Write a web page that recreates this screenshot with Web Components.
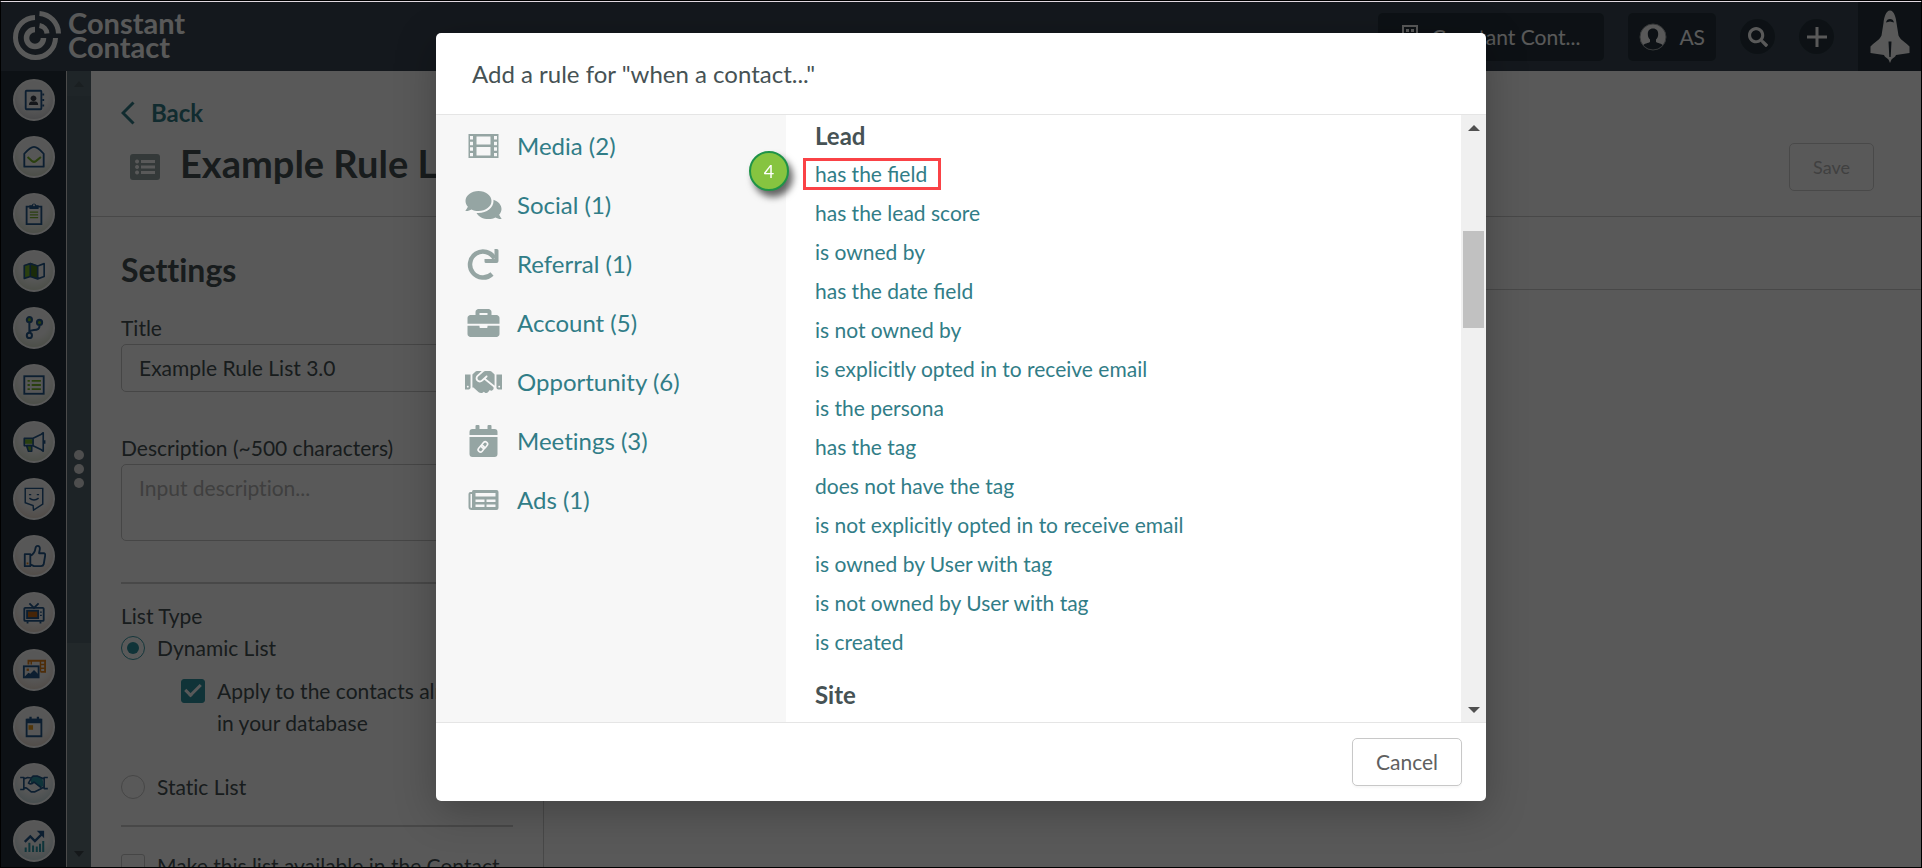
<!DOCTYPE html>
<html lang="en">
<head>
<meta charset="utf-8">
<title>Example Rule List 3.0</title>
<style>
    html, body {
        margin: 0;
        height: 100%;
    }

    body {
        font-family: Lato, "Liberation Sans", sans-serif;
        font-size: 21px;
        font-variant-ligatures: none;
        line-height: 32px;
        color: #465254;
        --link: #317d87;
        --rule: #cfcfcf;
    }
</style>
</head>
<body>
    <app-shell>
        <app-bar slot="bar" account="Constant Cont..." user="AS"></app-bar>
        <nav-rail slot="rail"></nav-rail>
        <list-page heading="Example Rule List 3.0">
            <list-settings></list-settings>
        </list-page>
        <rule-dialog slot="dialog">
            <span slot="title">Add a rule for "when a contact..."</span>

            <rule-category slot="category" icon="film">Media (2)</rule-category>
            <rule-category slot="category" icon="comments">Social (1)</rule-category>
            <rule-category slot="category" icon="redo">Referral (1)</rule-category>
            <rule-category slot="category" icon="briefcase">Account (5)</rule-category>
            <rule-category slot="category" icon="handshake">Opportunity (6)</rule-category>
            <rule-category slot="category" icon="meeting">Meetings (3)</rule-category>
            <rule-category slot="category" icon="news">Ads (1)</rule-category>

            <rule-group heading="Lead">
                <rule-option step="4">has the field</rule-option>
                <rule-option>has the lead score</rule-option>
                <rule-option>is owned by</rule-option>
                <rule-option>has the date field</rule-option>
                <rule-option>is not owned by</rule-option>
                <rule-option>is explicitly opted in to receive email</rule-option>
                <rule-option>is the persona</rule-option>
                <rule-option>has the tag</rule-option>
                <rule-option>does not have the tag</rule-option>
                <rule-option>is not explicitly opted in to receive email</rule-option>
                <rule-option>is owned by User with tag</rule-option>
                <rule-option>is not owned by User with tag</rule-option>
                <rule-option>is created</rule-option>
            </rule-group>
            <rule-group heading="Site"></rule-group>
        </rule-dialog>
    </app-shell>

<script>
const BLUE = '#24588a';
const GREEN = '#78b52c';
const ORANGE = '#e0801c';
const TEAL = '#2b96a5';

// name: [viewBox, markup]
const ICONS = {
    // header
    logo: ['0 0 50 50', `<g fill="none" stroke="currentColor">
        <path stroke-width="5" d="M23 6.500A20 20 0 1 0 43.500 27"/>
        <path stroke-width="5" d="M27.500 2.500A20.500 20.500 0 0 1 46.500 22.500"/>
        <path stroke-width="5.500" d="M23 18.500A8.500 8.500 0 1 0 31.500 27"/>
        <path stroke-width="5" d="M27.500 14.500A9 9 0 0 1 35 22.500"/></g>`],
    building: ['0 0 16 24', `<path fill="none" stroke="currentColor" stroke-width="2" d="M1 1h14v22H1z"/>
        <path fill="currentColor" d="M4 4h3v3H4zM9 4h3v3H9zM4 10h3v3H4zM9 10h3v3H9zM6 17h4v6H6z"/>`],
    avatar: ['0 0 28 28', `<circle cx="14" cy="14" r="13" fill="#fff"/>
        <path fill="#25333c" d="M14 5.500c3.500 0 5.200 2.300 5.200 5.400 0 2.400-.8 4.400-2.200 5.700v2.200c0 1 4.600 1.300 7 3.400A13 13 0 0 1 4 22.200c2.400-2.100 7-2.400 7-3.400v-2.200c-1.400-1.300-2.200-3.300-2.200-5.700 0-3.100 1.700-5.400 5.200-5.400z"/>
        <circle cx="14" cy="14" r="13" fill="none" stroke="#9a9fa3" stroke-width="1"/>`],
    search: ['0 0 512 512', `<path fill="currentColor" d="M505 442.700L405.300 343c-4.500-4.500-10.600-7-17-7H372c27.600-35.300 44-79.700 44-128C416 93.100 322.900 0 208 0S0 93.100 0 208s93.100 208 208 208c48.300 0 92.700-16.400 128-44v16.300c0 6.400 2.500 12.500 7 17l99.700 99.700c9.400 9.400 24.600 9.400 33.900 0l28.300-28.300c9.400-9.400 9.400-24.600.1-34zM208 336c-70.700 0-128-57.200-128-128 0-70.700 57.200-128 128-128 70.700 0 128 57.200 128 128 0 70.700-57.200 128-128 128z"/>`],
    plus: ['0 0 20 20', `<path stroke="currentColor" stroke-width="3" d="M10 0v20M0 10h20"/>`],
    shuttle: ['0 0 40 52', `<path fill="currentColor" fill-rule="evenodd" d="M20 0c4 0 6 7 6.500 12.500L28.500 25c2 4.500 6 6 11 11v6.500L26 44.500c-.5 2-2.500 2.500-4.500 4.500L20 52.500 18.500 49c-2-2-4-2.500-4.500-4.500L.5 42.500V36c5-5 9-6.500 11-11l2-12.500C14 7 16 0 20 0zm0 8.500c-2 0-3.500 1-4 3.500l4-1 4 1c-.5-2.500-2-3.500-4-3.500zM18.500 31l.8 15.500h1.400L21.500 31z"/>`],

    // page
    back: ['0 0 14 24', `<path fill="none" stroke="currentColor" stroke-width="3" d="M12.500 1.500L2 12l10.500 10.500"/>`],
    list: ['0 0 30 26', `<path fill="currentColor" fill-rule="evenodd" d="M3 0h24a3 3 0 0 1 3 3v20a3 3 0 0 1-3 3H3a3 3 0 0 1-3-3V3a3 3 0 0 1 3-3zm4 5.500a2 2 0 1 0 .1 0zM11 6v3h14V6zm-4 5a2 2 0 1 0 .1 0zM11 11.500v3h14v-3zM7 16.500a2 2 0 1 0 .1 0zM11 17v3h14v-3z"/>`],

    // dialog
    film: ['-2 -3 36 32', `<path fill="currentColor" fill-rule="evenodd" d="M1 1h30v24H1zM2.500 3v3.500h3V3zm0 5.700v3.500h3V8.700zm0 5.600v3.500h3v-3.500zm0 5.600v3.300h3v-3.300zM26.500 3v3.500h3V3zm0 5.700v3.500h3V8.700zm0 5.600v3.500h3v-3.500zm0 5.600v3.300h3v-3.300zM9 3.500v8h14v-8zM9 14v8.500h14V14z"/>`],
    comments: ['0 0 576 512', `<path fill="currentColor" d="M416 192c0-88.400-93.100-160-208-160S0 103.600 0 192c0 34.300 14.100 65.900 38 92-13.400 30.200-35.500 54.200-35.800 54.500-2.200 2.300-2.800 5.700-1.500 8.700S4.800 352 8 352c36.600 0 66.900-12.300 88.700-25 32.200 15.700 70.300 25 111.300 25 114.900 0 208-71.600 208-160zm122 220c23.900-26 38-57.700 38-92 0-66.900-53.500-124.200-129.300-148.100.9 6.600 1.300 13.300 1.300 20.100 0 105.900-107.700 192-240 192-10.800 0-21.300-.8-31.700-1.900C207.800 439.600 281.800 480 368 480c41 0 79.100-9.200 111.300-25 21.800 12.700 52.100 25 88.700 25 3.200 0 6.100-1.900 7.300-4.800 1.300-2.900.7-6.300-1.500-8.700-.3-.3-22.400-24.200-35.800-54.500z"/>`],
    redo: ['-2 0 36 32', `<path fill="none" stroke="currentColor" stroke-width="4.500" d="M24.500 26A13 13 0 1 1 27 10.500"/>
        <path fill="currentColor" d="M27 1h2.500q1.500 0 1.500 1.500V13q0 2-2 2H18.500Q17 15 17 13.500V11h10z"/>`],
    briefcase: ['0 0 512 512', `<path fill="currentColor" d="M320 320c0 8.840-7.160 16-16 16h-96c-8.840 0-16-7.160-16-16v-22H0v134c0 25.600 22.400 48 48 48h416c25.600 0 48-22.400 48-48V298H320v22zm144-192h-80V80c0-25.600-22.400-48-48-48H176c-25.600 0-48 22.400-48 48v48H48c-25.600 0-48 22.400-48 48v90h512v-90c0-25.600-22.400-48-48-48zm-144 0H192V96h128v32z"/>`],
    handshake: ['0 0 640 512', `<path fill="currentColor" d="M434.700 64h-85.900c-8 0-15.700 3-21.600 8.400l-98.300 90c-.1.1-.2.3-.3.4-16.600 15.600-16.300 40.500-2.100 56 12.700 13.900 39.400 17.600 56.100 2.700.1-.1.3-.1.4-.2l79.900-73.200c6.500-5.900 16.700-5.500 22.600 1 6 6.500 5.500 16.600-1 22.600l-26.100 23.900L504 313.800c2.900 2.400 5.500 5 7.900 7.700V128l-54.600-54.600c-5.900-6-14.100-9.400-22.600-9.400zM544 128.200v223.900c0 17.700 14.300 32 32 32h64V128.200h-96zm48 223.900c-8.800 0-16-7.200-16-16s7.200-16 16-16 16 7.200 16 16-7.200 16-16 16zM0 384h64c17.700 0 32-14.300 32-32V128.200H0V384zm48-63.900c8.800 0 16 7.200 16 16s-7.200 16-16 16-16-7.200-16-16c0-8.900 7.200-16 16-16zm435.900 18.600L334.600 217.500l-30 27.500c-29.700 27.100-75.200 24.500-101.700-4.400-26.900-29.400-24.800-74.900 4.400-101.700L289.100 64h-83.800c-8.500 0-16.600 3.400-22.600 9.400L128 128v223.900h18.300l90.500 81.900c27.400 22.300 67.700 18.100 90-9.300l.2-.2 17.900 15.500c15.900 13 39.400 10.500 52.300-5.400l31.400-38.600 5.400 4.400c13.700 11.100 33.900 9.100 45-4.700l9.500-11.700c11.200-13.800 9.100-33.900-4.600-45.100z"/>`],
    meeting: ['-2 0 36 32', `<path fill="currentColor" d="M5 4h3V1q0-1 1-1h2q1 0 1 1v3h8V1q0-1 1-1h2q1 0 1 1v3h3q3 0 3 3v3H2V7q0-3 3-3zM2 12h28v17q0 3-3 3H5q-3 0-3-3z"/>
        <g fill="none" stroke="#f7f7f7" stroke-width="1.600"><rect x="-2.300" y="-3.500" width="4.600" height="7" rx="2.300" transform="translate(13.700 23.800) rotate(40)"/>
        <rect x="-2.300" y="-3.500" width="4.600" height="7" rx="2.300" transform="translate(17 20) rotate(40)"/></g>`],
    news: ['-2 -5 36 32', `<path fill="currentColor" fill-rule="evenodd" d="M6 1h23q2 0 2 2v16q0 2-2 2H4q-3 0-3-3V5q0-2 2-2h1.500Q4.500 1 6 1zM3 5v13q0 1 .7 1T4.500 18V5zM8 4v3.500h20V4zm0 6.500V13h9v-2.500zm11 0V13h9v-2.500zM8 15.500V18h9v-2.500zm11 0V18h9v-2.500z"/>`],

    // rail
    contacts: ['0 0 26 26', `<g fill="none" stroke="${BLUE}" stroke-width="2"><rect x="4" y="3" width="17" height="20" rx="1"/><path d="M22 7h2M22 13h2M22 19h2"/></g>
        <path fill="#39404a" d="M12.500 8a3.200 3.200 0 1 1-.1 0zM7.500 18.500q0-4 3-4h4q3 0 3 4z"/>`],
    mail: ['0 0 26 26', `<path fill="none" stroke="${BLUE}" stroke-width="2" stroke-linejoin="round" d="M2.500 23.500V9.500Q9 2 13 2t10.500 7.500v14z"/>
        <path fill="none" stroke="${GREEN}" stroke-width="2.200" d="M6 13l5 4.500q2 1.500 4 0L20.500 13"/>`],
    clipboard: ['0 0 26 26', `<path fill="none" stroke="${BLUE}" stroke-width="2" d="M5 5h16v19H5z"/><path fill="${BLUE}" d="M8 3.500h2.500a2.600 2.600 0 0 1 5 0H18v4H8z"/><circle cx="13" cy="3.500" r="1" fill="#f3f3f3"/>
        <path stroke="${GREEN}" stroke-width="1.400" d="M8.500 11h9M8.500 14h9M8.500 17h9"/>`],
    map: ['0 0 26 26', `<path fill="${GREEN}" d="M2 7l7-3v15l-7 2z"/><path fill="#4c7c1a" d="M9 4l8 3v15l-8-3z"/>
        <path fill="none" stroke="${BLUE}" stroke-width="1.800" stroke-linejoin="round" d="M2.500 7L9 5l8 2.500L24 5v14l-7 2.500L9 19l-6.500 2zM9 5v14M17 7.500v14"/>`],
    branch: ['0 0 26 26', `<path fill="none" stroke="${BLUE}" stroke-width="2.200" d="M8 7v12M8 17q1-1.500 5-1.800 6-.2 6-4.700"/>
        <g stroke="${BLUE}" stroke-width="2.200"><circle cx="8" cy="4" r="2.800" fill="${GREEN}"/><circle cx="19" cy="7" r="2.800" fill="${GREEN}"/><circle cx="8" cy="21" r="2.800" fill="#f3f3f3"/></g>`],
    lists: ['0 0 26 26', `<rect x="2.500" y="3.500" width="21" height="19" fill="none" stroke="${BLUE}" stroke-width="2"/>
        <path stroke="${GREEN}" stroke-width="2" d="M6 8.500h2.500M10.500 8.500h10M6 13h2.500M10.500 13h10M6 17.500h2.500M10.500 17.500h10"/>`],
    megaphone: ['0 0 26 26', `<path fill="${GREEN}" d="M2 10h10v5H2z"/><g fill="none" stroke="${BLUE}" stroke-width="1.800" stroke-linejoin="round"><path d="M2.500 9h9.500v8H2.500zM12 9l9-4.500 2-1.500v20l-2-1.500-9-4.500M24.500 11v4"/><path fill="${GREEN}" d="M5 17h5.500v6H7z"/></g>`],
    smile: ['0 0 26 26', `<g fill="none" stroke="${BLUE}" stroke-width="1.600"><path d="M3.500 1.500h19v17l-10 6.500-.5-5-8.500-3z"/><path d="M8 12q5 4 10 0"/></g><path fill="${BLUE}" d="M7.500 7.500h2.500v1.500H7.500zM16 7.500h2.500v1.500H16z"/>`],
    thumb: ['0 0 26 26', `<path fill="none" stroke="${BLUE}" stroke-width="2" stroke-linejoin="round" d="M3 11h6v13H3zM9 13q5-3 5.500-8 .3-3 2.500-3 2.500 0 2.300 3.500L18.500 10h5q2 0 1.500 3l-1.500 9q-.5 2-3 2H13l-4-2"/><path fill="${ORANGE}" d="M5 20h2v2H5z"/>`],
    tv: ['0 0 26 26', `<g fill="none" stroke="${BLUE}" stroke-width="2"><rect x="2.500" y="7.500" width="21" height="14" rx="1"/><path d="M8 2.500l5 5 5-5M6 22v2.500M20 22v2.500"/><rect x="5.500" y="10.500" width="12" height="8" fill="#c96a14"/><path stroke-width="1.400" d="M19.500 12h2M19.500 15.500h2"/></g>`],
    media: ['0 0 26 26', `<path fill="none" stroke="${ORANGE}" stroke-width="2" d="M7 7V3h18v12h-5"/><path stroke="${ORANGE}" stroke-width="1.600" d="M10 3v4M20 3v12M20 7h5M20 11h5"/>
        <rect x="2" y="9" width="16" height="12" fill="#f3f3f3" stroke="${BLUE}" stroke-width="2"/><path fill="${BLUE}" d="M3 20l4-4 2 1 4-4 5 5v3H3z"/><path fill="${ORANGE}" d="M5 11.500h2.500V14H5z"/>`],
    calendar: ['0 0 26 26', `<path fill="none" stroke="${BLUE}" stroke-width="2" d="M5 5h16v18H5z"/><path fill="${BLUE}" d="M5 4h16v5H5zM8 2h2.500v3H8zM16 2h2.500v3H16z"/><path fill="#e69a1e" d="M7 11h5v5H7z"/>`],
    deal: ['0 0 32 26', `<path fill="${TEAL}" d="M13 6l6-2 6 2 1.500 9-4 2-6-6-4 2z"/><g fill="none" stroke="${BLUE}" stroke-width="1.800" stroke-linejoin="round"><path d="M1 6h4v13H1M31 6h-4v12h4M5 7.500l4-1.500 4 .5 2-2h5l7 3M5 17l3 .5 5 4h4l6-3 4-2.500"/><path d="M13 7l-3 5q3 2 6-1l8 6"/></g>`],
    chart: ['0 0 26 26', `<path fill="none" stroke="${BLUE}" stroke-width="2.600" d="M3 14l6-6 5 5 8-8"/><path fill="${BLUE}" d="M16 2h8v8z"/>
        <path stroke="${TEAL}" stroke-width="2.200" d="M4 20v5M8 15v10M12 18v7M16 19v6M19.500 16v9M23 13v12"/>`]
};

class AppIcon extends HTMLElement {
    constructor() {
        super();
        this.attachShadow({ mode: 'open' });
    }

    connectedCallback() {
        const [viewBox, markup] = ICONS[this.getAttribute('name')];
        this.shadowRoot.innerHTML = `
        <style>
        :host {
            display: block;
            flex: none;
        }

        svg {
            display: block;
            width: 100%;
            height: 100%;
        }
        </style>
        <svg viewBox="${viewBox}" aria-hidden="true">${markup}</svg>
        `;
    }
}

class AppShell extends HTMLElement {
    constructor() {
        super();
        this.attachShadow({ mode: 'open' });

        this.shadowRoot.innerHTML = `
        <style>
        :host {
            position: relative;
            display: flex;
            flex-direction: column;
            box-sizing: border-box;
            height: 100vh;
            border: 1px solid #000;
            border-top-width: 2px;
            border-top-color: #e0d8e0;
            overflow: hidden;
            background: #fff;
        }

        .columns {
            display: flex;
            flex: 1;
            min-height: 0;
        }

        .overlay {
            position: absolute;
            inset: 0;
            display: flex;
            justify-content: center;
            align-items: flex-start;
            padding-top: 31px;
            background: rgba(0, 0, 0, 0.65);
        }

        /* dark hairline above the light one */
        .edge {
            position: fixed;
            inset: 0 0 auto;
            height: 1px;
            background: #000;
        }
        </style>
        <slot name="bar"></slot>
        <div class="columns">
            <slot name="rail"></slot>
            <slot></slot>
        </div>
        <div class="overlay"><slot name="dialog"></slot></div>
        <div class="edge"></div>
        `;
    }
}

class AppBar extends HTMLElement {
    constructor() {
        super();
        this.attachShadow({ mode: 'open' });
    }

    connectedCallback() {
        this.shadowRoot.innerHTML = `
        <style>
        :host {
            display: flex;
            align-items: stretch;
            height: 69px;
            background: #394753;
            color: #fff;
        }

        .brand {
            display: flex;
            align-items: flex-start;
            gap: 6px;
            flex: 1;
            padding: 9px 0 0 11px;
            color: #fff;
            text-decoration: none;
            font-size: 29px;
            font-weight: 700;
            line-height: 24px;
        }

        .brand app-icon {
            width: 50px;
            height: 50px;
        }

        .tools {
            display: flex;
            align-items: center;
            gap: 24px;
            padding-right: 24px;
        }

        button {
            display: flex;
            align-items: center;
            height: 48px;
            border: 0;
            border-radius: 5px;
            background: #25333c;
            color: #fff;
            font: inherit;
        }

        .account {
            gap: 14px;
            padding: 0 24px;
        }

        .user {
            gap: 12px;
            padding: 0 11px;
        }

        .round {
            justify-content: center;
            width: 35px;
            height: 35px;
            padding: 0;
            border-radius: 50%;
        }

        .account app-icon { width: 16px; height: 24px; }
        .user app-icon { width: 28px; height: 28px; }
        .round app-icon { width: 20px; height: 20px; }

        .launch {
            justify-content: center;
            width: 63px;
            height: auto;
            padding: 0;
            border-radius: 0;
        }

        .launch app-icon { width: 40px; height: 53px; }
        </style>
        <a class="brand" href="#"><app-icon name="logo"></app-icon><span>Constant<br>Contact</span></a>
        <div class="tools">
            <button class="account"><app-icon name="building"></app-icon>${this.getAttribute('account')}</button>
            <button class="user"><app-icon name="avatar"></app-icon>${this.getAttribute('user')}</button>
            <button class="round" aria-label="Search"><app-icon name="search"></app-icon></button>
            <button class="round" aria-label="Add"><app-icon name="plus"></app-icon></button>
        </div>
        <button class="launch" aria-label="Launch"><app-icon name="shuttle"></app-icon></button>
        `;
    }
}

class NavRail extends HTMLElement {
    constructor() {
        super();
        this.attachShadow({ mode: 'open' });

        // [icon, label, tint of the button's lower edge]
        const items = [
            ['contacts', 'Contacts', '#c4c4c8'], ['mail', 'Email', '#c9d6b8'], ['clipboard', 'Forms', '#c9d6b8'],
            ['map', 'Pages', '#c9d6b8'], ['branch', 'Automations', '#c9d6b8'], ['lists', 'Lists', '#c9d6b8'],
            ['megaphone', 'Campaigns', '#c9d6b8'], ['smile', 'Chat', '#e3cdbb'], ['thumb', 'Social', '#e3cdbb'],
            ['tv', 'Ads', '#e3cdbb'], ['media', 'Media', '#e3cdbb'], ['calendar', 'Calendar', '#e3cdbb'],
            ['deal', 'Sales', '#b5d3d8'], ['chart', 'Analytics', '#b5d3d8']
        ];

        this.shadowRoot.innerHTML = `
        <style>
        :host {
            display: flex;
            flex: none;
        }

        nav {
            display: flex;
            flex-direction: column;
            gap: 15px;
            padding: 8px 11px 0 12px;
            background: #25333c;
            border-right: 1px solid #d8d8d8;
        }

        nav a {
            display: flex;
            align-items: center;
            justify-content: center;
            box-sizing: border-box;
            width: 42px;
            height: 42px;
            border: 2px solid #fff;
            border-radius: 50%;
            background: radial-gradient(circle at 50% 35%, #fafafa 45%, var(--tint) 100%);
        }

        nav app-icon {
            width: 24px;
            height: 24px;
        }

        nav app-icon[name="deal"] {
            width: 30px;
        }

        .track {
            display: flex;
            flex-direction: column;
            align-items: center;
            justify-content: space-between;
            box-sizing: border-box;
            width: 24px;
            padding: 10px 0;
            background: linear-gradient(#5a6a72 25px, #55666e 25px 572px, #63727a 572px);
        }

        .arrow {
            border: 5px solid transparent;
            border-top-width: 0;
            border-bottom: 6px solid #4b5960;
        }

        .arrow.down {
            border-bottom-color: #3c474c;
            transform: rotate(180deg);
        }

        .grip {
            display: grid;
            gap: 4px;
        }

        .grip i {
            width: 10px;
            height: 10px;
            border-radius: 50%;
            background: #dedede;
        }
        </style>
        <nav>${items.map(([icon, label, tint]) => `
            <a href="#" aria-label="${label}" style="--tint: ${tint}"><app-icon name="${icon}"></app-icon></a>`).join('')}
        </nav>
        <div class="track">
            <div class="arrow"></div>
            <div class="grip"><i></i><i></i><i></i></div>
            <div class="arrow down"></div>
        </div>
        `;
    }
}

class ListPage extends HTMLElement {
    constructor() {
        super();
        this.attachShadow({ mode: 'open' });
    }

    connectedCallback() {
        this.shadowRoot.innerHTML = `
        <style>
        :host {
            display: flex;
            flex-direction: column;
            flex: 1;
            min-width: 0;
        }

        header {
            display: flex;
            align-items: flex-end;
            justify-content: space-between;
            padding: 26px 47px 25px 30px;
            border-bottom: 1px solid var(--rule);
        }

        .heading {
            display: grid;
            gap: 10px;
            padding-bottom: 4px;
        }

        .back {
            display: flex;
            align-items: center;
            gap: 16px;
            color: var(--link);
            font-size: 24px;
            font-weight: 700;
            text-decoration: none;
        }

        .back app-icon { width: 14px; height: 24px; }

        .title {
            display: flex;
            align-items: center;
            gap: 20px;
            padding-left: 9px;
        }

        .title app-icon {
            width: 30px;
            height: 26px;
            margin-top: 8px;
            color: #94a3a3;
        }

        h1 {
            margin: 0;
            font-size: 38px;
            font-weight: 700;
            line-height: 48px;
        }

        .save {
            width: 85px;
            height: 48px;
            border: 1px solid #d2d2d2;
            border-radius: 5px;
            background: none;
            color: #b8b8b8;
            font: inherit;
            font-size: 18px;
        }

        .body {
            display: flex;
            flex: 1;
            min-height: 0;
            overflow: hidden;
        }

        .toolbar {
            flex: 1;
            height: 72px;
            border-bottom: 1px solid var(--rule);
        }
        </style>
        <header>
            <div class="heading">
                <a class="back" href="#"><app-icon name="back"></app-icon>Back</a>
                <div class="title"><app-icon name="list"></app-icon><h1>${this.getAttribute('heading')}</h1></div>
            </div>
            <button class="save" disabled>Save</button>
        </header>
        <div class="body">
            <slot></slot>
            <div class="toolbar"></div>
        </div>
        `;
    }
}

class ListSettings extends HTMLElement {
    constructor() {
        super();
        this.attachShadow({ mode: 'open' });

        this.shadowRoot.innerHTML = `
        <style>
        :host {
            display: block;
            flex: none;
            box-sizing: border-box;
            width: 453px;
            padding: 33px 30px 0;
            border-right: 1px solid var(--rule);
        }

        form {
            display: flex;
            flex-direction: column;
        }

        h2 {
            margin: 0 0 22px;
            font-size: 32px;
            line-height: 40px;
        }

        input[type="text"], textarea {
            box-sizing: border-box;
            width: 100%;
            margin: 0 0 40px;
            padding: 7px 17px;
            border: 1px solid #c8c8c8;
            border-radius: 5px;
            background: none;
            color: inherit;
            font: inherit;
            resize: none;
        }

        textarea {
            height: 77px;
            margin-bottom: 41px;
        }

        ::placeholder {
            color: #b4b4b4;
            opacity: 1;
        }

        hr {
            width: 100%;
            margin: 0;
            border: 0;
            border-top: 2px solid var(--rule);
        }

        fieldset {
            margin: 16px 0 22px;
            padding: 0;
            border: 0;
        }

        legend {
            padding: 0;
        }

        .choice {
            display: flex;
            gap: 12px;
        }

        .nested {
            margin: 11px 0 32px;
            padding: 0 15px 0 60px;
        }

        .choice input {
            display: grid;
            place-items: center;
            flex: none;
            appearance: none;
            box-sizing: border-box;
            width: 24px;
            height: 24px;
            margin: 4px 0;
            border: 1px solid #c8c8c8;
            border-radius: 3px;
        }

        .choice input[type="radio"] {
            border-radius: 50%;
        }

        .choice input[type="radio"]:checked {
            border-color: #3c9ba8;
        }

        .choice input[type="radio"]:checked::before {
            content: "";
            width: 12px;
            height: 12px;
            border-radius: 50%;
            background: #2f93a1;
        }

        .choice input[type="checkbox"]:checked {
            border-color: #2f93a1;
            background: #2f93a1;
        }

        .choice input[type="checkbox"]:checked::before {
            content: "";
            width: 13px;
            height: 6px;
            margin-bottom: 5px;
            border: solid #fff;
            border-width: 0 0 3px 3px;
            transform: rotate(-45deg);
        }

        .last {
            margin-top: 23px;
        }
        </style>
        <form>
            <h2>Settings</h2>
            <label for="title">Title</label>
            <input type="text" id="title" value="Example Rule List 3.0">
            <label for="description">Description (~500 characters)</label>
            <textarea id="description" placeholder="Input description..."></textarea>
            <hr>
            <fieldset>
                <legend>List Type</legend>
                <label class="choice"><input type="radio" name="type" checked>Dynamic List</label>
                <label class="choice nested"><input type="checkbox" checked>Apply to the contacts already in your database</label>
                <label class="choice"><input type="radio" name="type">Static List</label>
            </fieldset>
            <hr>
            <label class="choice last"><input type="checkbox">Make this list available in the Contact</label>
        </form>
        `;
    }
}

class RuleDialog extends HTMLElement {
    constructor() {
        super();
        this.attachShadow({ mode: 'open' });

        this.shadowRoot.innerHTML = `
        <style>
        :host {
            display: flex;
            flex-direction: column;
            width: min(1050px, 90vw);
            height: calc(100vh - 100px);
            border-radius: 5px;
            background: #fff;
            box-shadow: 0 10px 40px rgba(0, 0, 0, 0.25);
        }

        header {
            padding: 25px 36px 24px;
            border-bottom: 1px solid #e5e5e5;
        }

        h2 {
            margin: 0;
            font-size: 24px;
            font-weight: 400;
        }

        .body {
            display: flex;
            flex: 1;
            min-height: 0;
        }

        .categories {
            display: flex;
            flex-direction: column;
            gap: 27px;
            box-sizing: border-box;
            width: 350px;
            padding: 15px 29px 0;
            background: #f7f7f7;
        }

        .rules {
            flex: 1;
            padding: 5px 29px 0;
            overflow: hidden;
        }

        .scrollbar {
            display: flex;
            flex-direction: column;
            align-items: center;
            box-sizing: border-box;
            width: 25px;
            padding: 10px 0 9px;
            background: #f0f0f0;
        }

        .thumb {
            width: 21px;
            height: 97px;
            margin: 100px 0 auto;
            background: #c1c1c1;
        }

        .arrow {
            border: 6px solid transparent;
            border-top-width: 0;
            border-bottom-color: #505050;
        }

        .arrow.down {
            transform: rotate(180deg);
        }

        footer {
            display: flex;
            justify-content: flex-end;
            padding: 15px 24px;
            border-top: 1px solid #e5e5e5;
        }

        button {
            width: 110px;
            height: 48px;
            border: 1px solid #c8c8c8;
            border-radius: 5px;
            background: #fff;
            box-shadow: 0 2px 2px rgba(0, 0, 0, 0.03);
            color: #606060;
            font: inherit;
        }
        </style>
        <header><h2><slot name="title"></slot></h2></header>
        <div class="body">
            <nav class="categories"><slot name="category"></slot></nav>
            <div class="rules"><slot></slot></div>
            <div class="scrollbar">
                <div class="arrow"></div>
                <div class="thumb"></div>
                <div class="arrow down"></div>
            </div>
        </div>
        <footer><button>Cancel</button></footer>
        `;
    }
}

class RuleCategory extends HTMLElement {
    constructor() {
        super();
        this.attachShadow({ mode: 'open' });
    }

    connectedCallback() {
        this.shadowRoot.innerHTML = `
        <style>
        :host {
            display: block;
        }

        a {
            display: flex;
            align-items: center;
            gap: 15px;
            color: var(--link);
            font-size: 24px;
            text-decoration: none;
        }

        app-icon {
            width: 37px;
            height: 32px;
            color: #95a5a3;
        }
        </style>
        <a href="#"><app-icon name="${this.getAttribute('icon')}"></app-icon><slot></slot></a>
        `;
    }
}

class RuleGroup extends HTMLElement {
    constructor() {
        super();
        this.attachShadow({ mode: 'open' });
    }

    connectedCallback() {
        this.shadowRoot.innerHTML = `
        <style>
        :host {
            display: block;
            margin-bottom: 21px;
        }

        h3 {
            margin: 0;
            font-size: 24px;
            font-weight: 700;
        }

        .options {
            display: grid;
            justify-items: start;
            gap: 7px;
            padding-top: 6px;
        }
        </style>
        <h3>${this.getAttribute('heading')}</h3>
        <div class="options"><slot></slot></div>
        `;
    }
}

class RuleOption extends HTMLElement {
    constructor() {
        super();
        this.attachShadow({ mode: 'open' });
    }

    connectedCallback() {
        const step = this.getAttribute('step');

        this.shadowRoot.innerHTML = `
        <style>
        :host {
            position: relative;
            display: block;
            font-variant-ligatures: normal;
        }

        a {
            color: var(--link);
            text-decoration: none;
        }

        .frame {
            position: absolute;
            inset: 0 -14px 0 -12px;
            border: 3px solid #fa4246;
            pointer-events: none;
        }

        /* fixed, so that the scrolling list does not clip it */
        .step {
            position: fixed;
            display: grid;
            place-items: center;
            box-sizing: border-box;
            width: 40px;
            height: 40px;
            margin: -7px 0 0 -66px;
            border: 2px solid #1f9348;
            border-radius: 50%;
            background: #86c440;
            box-shadow: 4px 6px 7px rgba(0, 0, 0, 0.6);
            color: #fff;
            font-size: 18px;
        }
        </style>
        ${step ? `<div class="frame"></div><div class="step">${step}</div>` : ''}
        <a href="#"><slot></slot></a>
        `;
    }
}

customElements.define('app-icon', AppIcon);
customElements.define('app-shell', AppShell);
customElements.define('app-bar', AppBar);
customElements.define('nav-rail', NavRail);
customElements.define('list-page', ListPage);
customElements.define('list-settings', ListSettings);
customElements.define('rule-dialog', RuleDialog);
customElements.define('rule-category', RuleCategory);
customElements.define('rule-group', RuleGroup);
customElements.define('rule-option', RuleOption);
</script>
</body>
</html>
